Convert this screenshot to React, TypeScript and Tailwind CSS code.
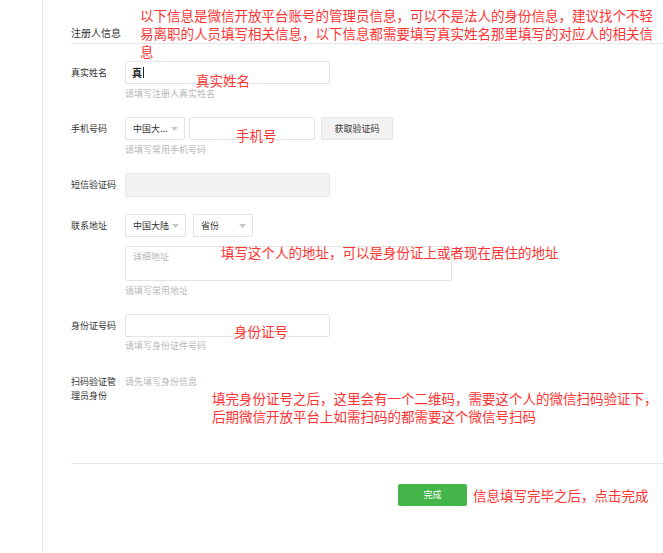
import React from "react";

const cjk = { fontFamily: '"Noto Sans CJK SC", "Noto Sans", sans-serif' };

function Arrow() {
  return (
    <svg width="7" height="4" viewBox="0 0 7 4" className="shrink-0">
      <path d="M0 0h7L3.5 4z" fill="#c6c6c6" />
    </svg>
  );
}

function Select({ label, className }: { label: string; className: string }) {
  return (
    <div
      className={`flex h-[23px] items-center justify-between rounded-[2px] border border-[#e3e3e3] bg-white pl-[7px] pr-[6px] text-[9px] text-[#333] ${className}`}
    >
      <span>{label}</span>
      <Arrow />
    </div>
  );
}

function Hint({ children, className = "" }: { children: React.ReactNode; className?: string }) {
  return <p className={`text-[9px] leading-[12px] text-[#b8b8b8] ${className}`}>{children}</p>;
}

function Row({ label, children, className = "" }: { label: string; children: React.ReactNode; className?: string }) {
  return (
    <div className={`flex ${className}`}>
      <div className="w-[54px] shrink-0 text-[9px] leading-[23px] text-[#333]">{label}</div>
      <div className="flex flex-col">{children}</div>
    </div>
  );
}

function Note({ children, className }: { children: React.ReactNode; className: string }) {
  return (
    <p className={`absolute whitespace-nowrap text-[13.5px] leading-[18px] text-[#ff3434] ${className}`}>{children}</p>
  );
}

export default function App() {
  return (
    <div className="relative flex h-[553px] w-[663px] overflow-hidden bg-white" style={cjk}>
      <div className="w-[42px] shrink-0" />
      <div className="flex flex-1 flex-col border-l border-[#e8e8e8] pl-[28px]">
        <div className="flex h-[44px] items-end border-b border-[#e8e8e8] pb-[3px]">
          <span className="text-[10px] leading-[14px] text-[#333]">注册人信息</span>
        </div>

        <div className="mt-[17px] flex flex-col">
          <Row label="真实姓名">
            <div className="flex h-[23px] w-[205px] items-center rounded-[2px] border border-[#e3e3e3] px-[6px]">
              <span className="text-[10px] font-semibold text-[#222]">真</span>
              <span className="ml-px h-[11px] w-px bg-[#222]" />
            </div>
            <Hint className="mt-[4px]">请填写注册人真实姓名</Hint>
          </Row>

          <Row label="手机号码" className="mt-[17px]">
            <div className="flex">
              <Select label="中国大..." className="w-[60px]" />
              <div className="ml-[4px] h-[23px] w-[126px] rounded-[2px] border border-[#e3e3e3]" />
              <button className="ml-[6px] h-[23px] w-[72px] rounded-[2px] border border-[#e4e4e4] bg-[#f2f2f2] text-[9px] text-[#333]">
                获取验证码
              </button>
            </div>
            <Hint className="mt-[4px]">请填写常用手机号码</Hint>
          </Row>

          <Row label="短信验证码" className="mt-[17px]">
            <div className="h-[24px] w-[205px] rounded-[2px] border border-[#e6e6e6] bg-[#f2f2f2]" />
          </Row>

          <Row label="联系地址" className="mt-[17px]">
            <div className="flex">
              <Select label="中国大陆" className="w-[61px]" />
              <Select label="省份" className="ml-[7px] w-[60px]" />
            </div>
            <div className="mt-[9px] h-[35px] w-[327px] rounded-[2px] border border-[#e3e3e3] px-[7px] pt-[3px] text-[9px] leading-[14px] text-[#b8b8b8]">
              详细地址
            </div>
            <Hint className="mt-[4px]">请填写常用地址</Hint>
          </Row>

          <Row label="身份证号码" className="mt-[17px]">
            <div className="h-[23px] w-[205px] rounded-[2px] border border-[#e3e3e3]" />
            <Hint className="mt-[3px]">请填写身份证件号码</Hint>
          </Row>

          <div className="mt-[23px] flex">
            <div className="w-[54px] shrink-0">
              <p className="w-[46px] text-[9px] leading-[14px] text-[#333]">扫码验证管理员身份</p>
            </div>
            <p className="text-[9px] leading-[14px] text-[#b8b8b8]">请先填写身份信息</p>
          </div>
        </div>

        <div className="mt-[60px] border-t border-[#e8e8e8]" />

        <div className="mt-[20px] flex items-center pl-[327px]">
          <button className="h-[22px] w-[69px] rounded-[2px] bg-[#44b549] text-[9px] text-white">完成</button>
          <span className="ml-[6px] text-[13.5px] leading-[18px] text-[#ff3434]">信息填写完毕之后，点击完成</span>
        </div>
      </div>

      <Note className="left-[140px] top-[6px]">
        以下信息是微信开放平台账号的管理员信息，可以不是法人的身份信息，建议找个不轻
        <br />
        易离职的人员填写相关信息，以下信息都需要填写真实姓名那里填写的对应人的相关信
        <br />息
      </Note>
      <Note className="left-[196px] top-[71px]">真实姓名</Note>
      <Note className="left-[236px] top-[126px]">手机号</Note>
      <Note className="left-[221px] top-[243px]">填写这个人的地址，可以是身份证上或者现在居住的地址</Note>
      <Note className="left-[234px] top-[322px]">身份证号</Note>
      <Note className="left-[212px] top-[389px]">
        填完身份证号之后，这里会有一个二维码，需要这个人的微信扫码验证下，
        <br />
        后期微信开放平台上如需扫码的都需要这个微信号扫码
      </Note>
    </div>
  );
}
